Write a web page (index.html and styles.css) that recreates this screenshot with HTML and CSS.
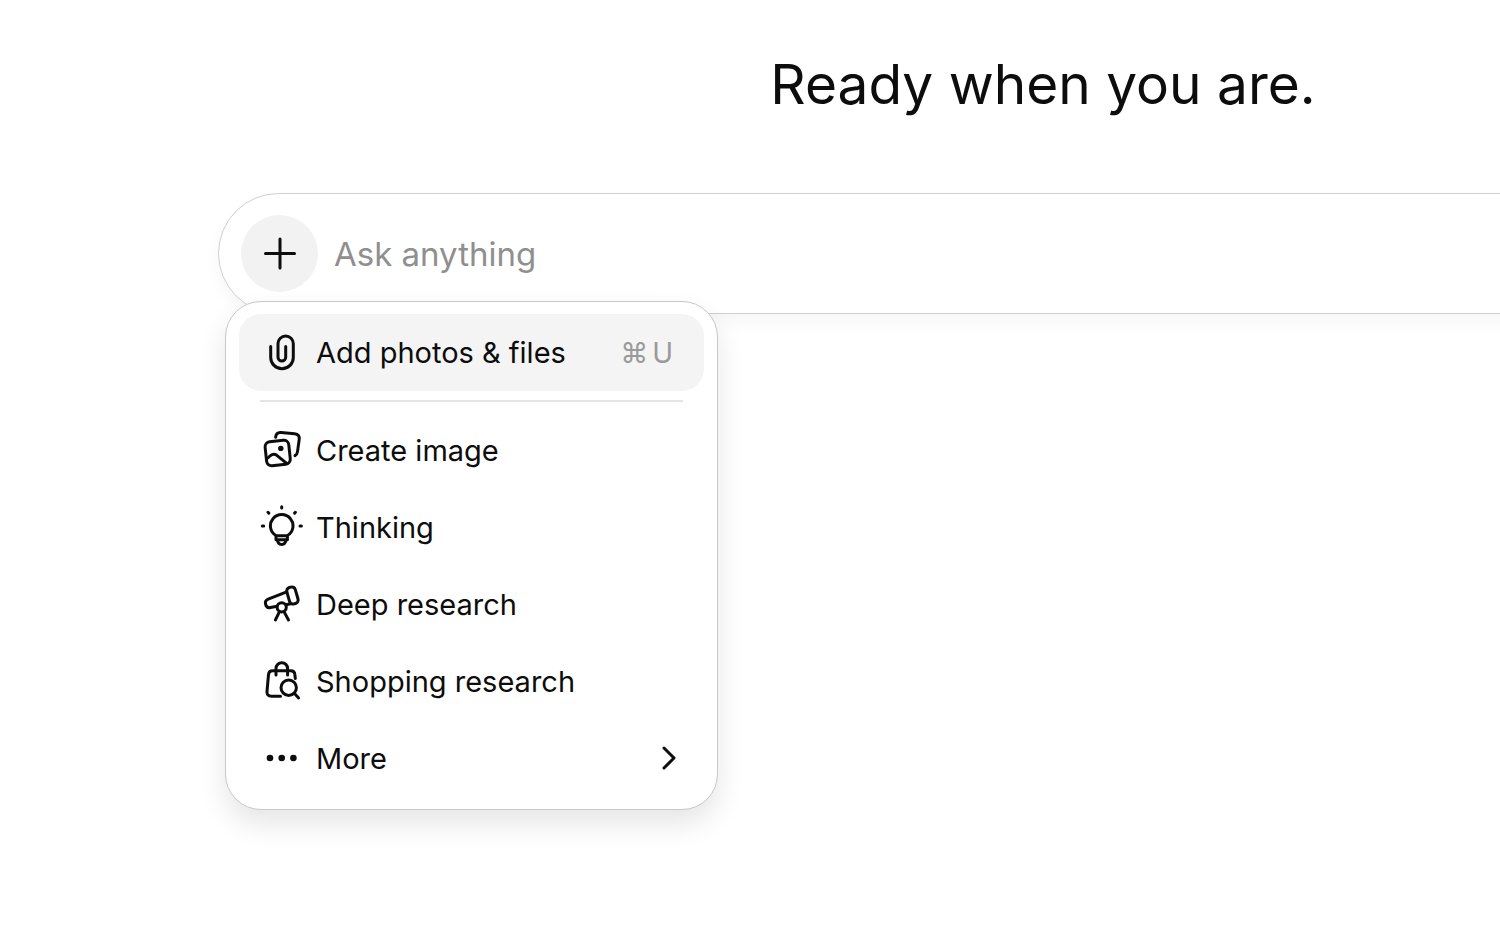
FILE: index.html
```html
<!DOCTYPE html>
<html lang="en">
<head>
  <meta charset="UTF-8" />
  <meta name="viewport" content="width=device-width, initial-scale=1.0"/>
  <title>New chat</title>
  <link rel="stylesheet" href="styles.css">
</head>
<body>
  <main class="page">
    <div class="chat">
      <h1>Ready when you are.</h1>

      <form class="composer">
        <button type="button" class="add-button" aria-label="Add files and more">
          <svg class="icon" viewBox="0 0 44 45" aria-hidden="true">
            <path d="M22 8v29M7.500 22.500h29"/>
          </svg>
        </button>
        <input type="text" class="prompt" aria-label="Message" placeholder="Ask anything">

        <div class="menu" role="menu">
          <button type="button" class="menu-item active" role="menuitem">
            <svg class="icon" viewBox="0 0 44 45" aria-hidden="true">
              <path d="M10.700 16.500v10.900a11.300 11.300 0 0 0 22.600 0V13.600a7.650 7.650 0 0 0-15.300 0v13.600a3.850 3.850 0 0 0 7.700 0V16.500"/>
            </svg>
            <span>Add photos &amp; files</span>
            <kbd><span>⌘</span><span>U</span></kbd>
          </button>

          <hr>

          <button type="button" class="menu-item" role="menuitem">
            <svg class="icon" viewBox="0 0 44 45" aria-hidden="true">
              <rect x="5.8" y="13" width="23.8" height="24" rx="5" transform="rotate(-6 17.7 25)"/>
              <path d="M7.2 30.5l3.4-3c2.2-1.8 3.9-1.8 6.2-.2l9.6 7.9M15.6 9.2c.4-3.4 2.2-5 5.4-4.7l13.7 1.3c3.4.4 5 2.4 4.5 5.600l-1.700 12.200c-.3 2.300-.9 3.300-2.500 4.100"/>
              <circle class="solid" cx="20.8" cy="20.4" r="2.7"/>
            </svg>
            <span>Create image</span>
          </button>

          <button type="button" class="menu-item" role="menuitem">
            <svg class="icon" viewBox="0 0 44 45" aria-hidden="true">
              <path d="M16.3 30.8a11.300 11.300 0 1 1 10.800 0M16 30.800h11.400v3.900H16zM17.300 34.700c.3 3.200 1.800 4.800 4.400 4.800s4.100-1.600 4.400-4.800M21.700 1.800v1.300M8 7.300l.8.8M35.400 7.300l-.8.8M2.300 21h1.400M40 21h1.400"/>
            </svg>
            <span>Thinking</span>
          </button>

          <button type="button" class="menu-item" role="menuitem">
            <svg class="icon" viewBox="0 0 44 45" aria-hidden="true">
              <rect x="28" y="5" width="8.800" height="17" rx="3.600" transform="rotate(-16 32.400 13.400)"/>
              <path d="M26.700 9.800L8.200 17.200c-2.500 1-3.300 2.600-2.600 5.200s2.400 3.700 4.900 3.100l6.600-1.300M26.200 22.700l4.200-.9M19.500 29.600L15.400 38M24 29.600l4.500 8.400"/>
              <circle cx="21.700" cy="25.300" r="4.600"/>
            </svg>
            <span>Deep research</span>
          </button>

          <button type="button" class="menu-item" role="menuitem">
            <svg class="icon" viewBox="0 0 44 45" aria-hidden="true">
              <path d="M20.500 37.300h-9c-3.200 0-4.800-1.700-4.500-4.800l1.500-16.800c.2-2.600 1.600-4 4.200-4h18c2.600 0 4 1.400 4.200 4l.4 3.800M16 16V9.500a5.800 5.800 0 0 1 11.600 0V16M34.300 34.300l4.300 4.600"/>
              <circle cx="28.700" cy="28.700" r="7.700"/>
            </svg>
            <span>Shopping research</span>
          </button>

          <button type="button" class="menu-item" role="menuitem" aria-haspopup="true">
            <svg class="icon" viewBox="0 0 44 45" aria-hidden="true">
              <g class="solid">
                <circle cx="10" cy="22" r="3.300"/>
                <circle cx="21.700" cy="22" r="3.300"/>
                <circle cx="33.400" cy="22" r="3.300"/>
              </g>
            </svg>
            <span>More</span>
            <svg class="chevron" viewBox="0 0 16 26" aria-hidden="true">
              <path d="M3 2l10 10L3 22"/>
            </svg>
          </button>
        </div>
      </form>
    </div>
  </main>
</body>
</html>
```
FILE: styles.css
```css
* {
  box-sizing: border-box;
}

body {
  margin: 0;
  font-family: Inter, "Liberation Sans", sans-serif;
  color: #0d0d0d;
  background-color: #fff;
}

.page {
  min-height: 100vh;
  padding: 48px 0 0 218px;
  overflow: hidden;
}

/* the composer is wider than the window and runs off its right edge */
.chat {
  width: 110vw;
}

h1 {
  margin: 0 0 73px;
  font-size: 55px;
  font-weight: 400;
  line-height: 72px;
  text-align: center;
}

button {
  padding: 0;
  border: none;
  background: none;
  font: inherit;
  color: inherit;
  cursor: pointer;
}

.composer {
  position: relative;
  display: flex;
  align-items: center;
  gap: 16px;
  padding: 21px 22px;
  border: 1px solid #cfcfcf;
  border-radius: 61px;
  background-color: #fff;
  box-shadow: 0 8px 16px rgba(0, 0, 0, 0.04);
}

.add-button {
  display: flex;
  align-items: center;
  justify-content: center;
  width: 77px;
  height: 77px;
  border-radius: 50%;
  background-color: #f2f2f2;
}

.prompt {
  flex: 1;
  padding: 0;
  border: none;
  outline: none;
  background: none;
  font: inherit;
  font-size: 33px;
  color: inherit;
}

.prompt::placeholder {
  color: #8f8f8f;
  opacity: 1;
}

.menu {
  position: absolute;
  top: 107px;
  left: 6px;
  width: 493px;
  padding: 12px 13px;
  border: 1px solid #c8c8c8;
  border-radius: 36px;
  background-color: #fff;
  box-shadow: 0 14px 28px rgba(0, 0, 0, 0.1);
}

.menu-item {
  display: flex;
  align-items: center;
  gap: 12px;
  width: 100%;
  height: 77px;
  padding: 0 27px 0 21px;
  border-radius: 22px;
  font-size: 29px;
  text-align: left;
}

.menu-item.active,
.menu-item:hover {
  background-color: #f4f4f4;
}

.menu hr {
  height: 2px;
  margin: 9px 21px 10px;
  border: none;
  background-color: #e4e4e4;
}

kbd {
  display: flex;
  align-items: center;
  gap: 4px;
  margin-left: auto;
  margin-right: 4px;
  font-family: inherit;
  font-size: 28px;
  color: #9a9a9a;
}

.icon,
.chevron {
  flex: none;
  fill: none;
  stroke: #0d0d0d;
  stroke-width: 3;
  stroke-linecap: round;
  stroke-linejoin: round;
}

.icon {
  width: 44px;
  height: 45px;
}

.chevron {
  width: 16px;
  height: 26px;
  margin-left: auto;
}

.solid {
  fill: #0d0d0d;
  stroke: none;
}
```
